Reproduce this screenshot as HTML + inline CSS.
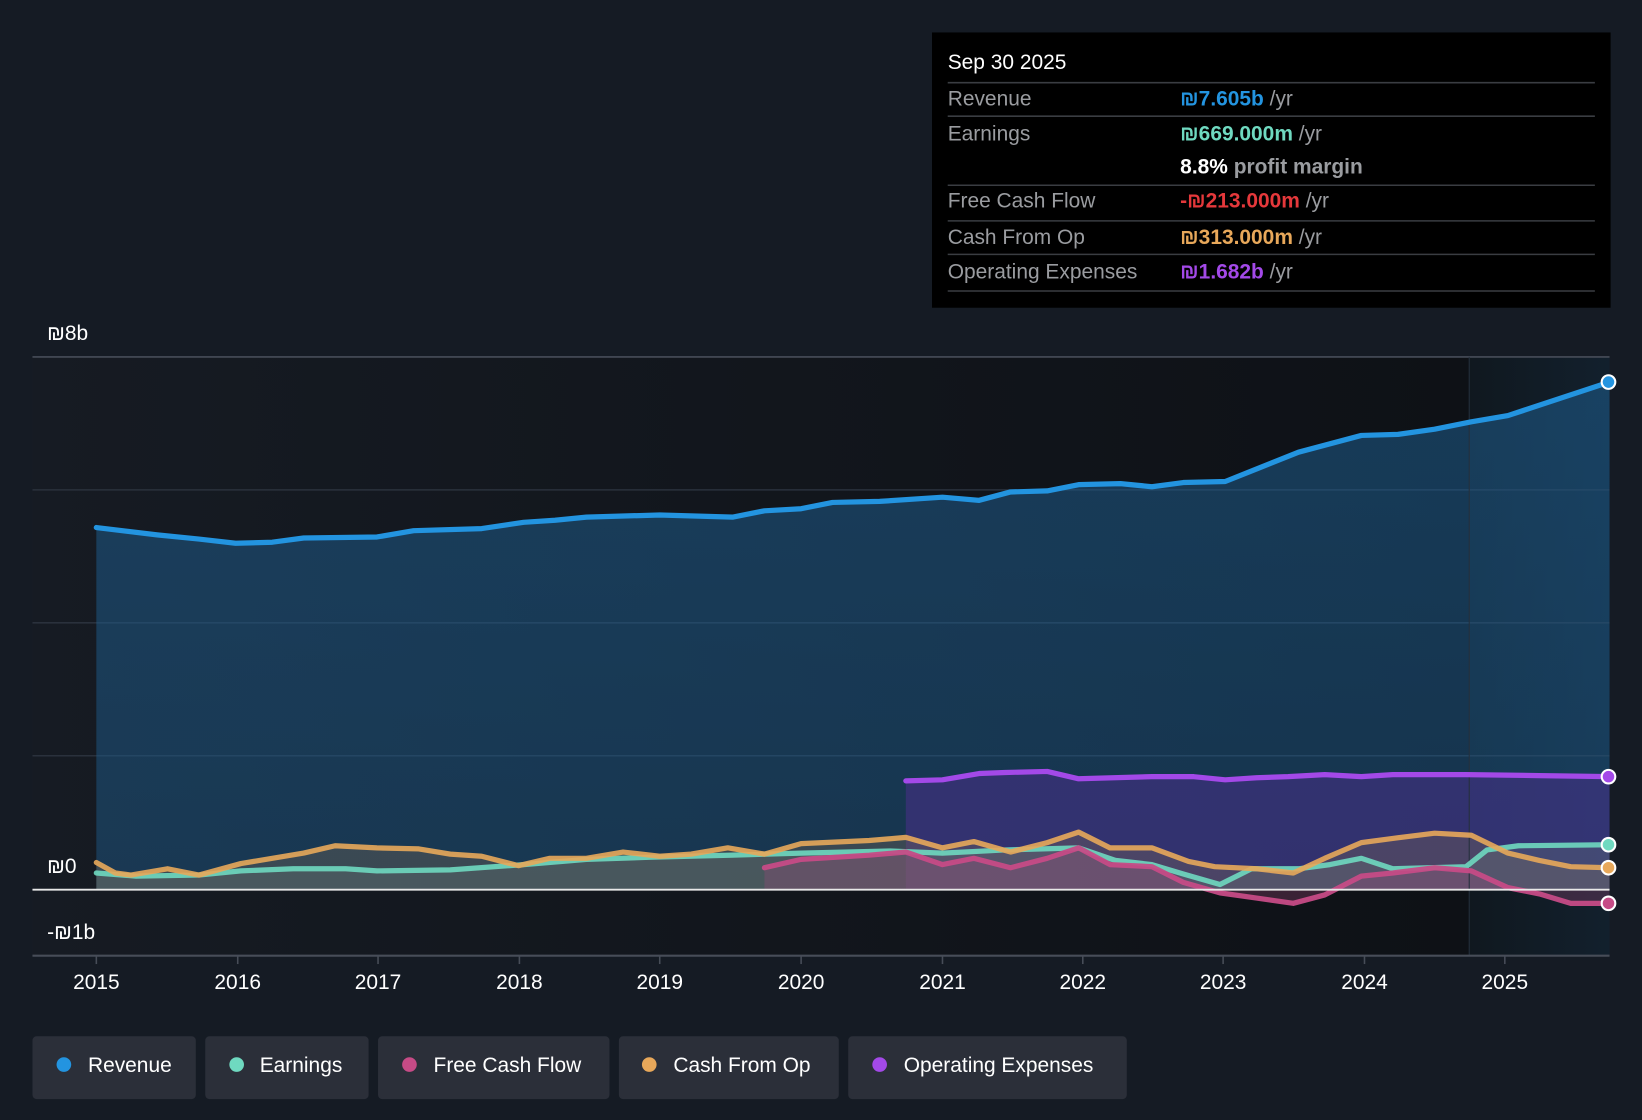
<!DOCTYPE html>
<html><head><meta charset="utf-8"><style>
html,body{margin:0;padding:0;background:#151b24;width:1642px;height:1120px;overflow:hidden}
svg{display:block}
text{font-family:"Liberation Sans",sans-serif}
</style></head><body>
<svg width="1642" height="1120" viewBox="0 0 1568 1070" preserveAspectRatio="none" xmlns="http://www.w3.org/2000/svg">
<defs>
<linearGradient id="pbg" x1="0" x2="1" y1="0" y2="0"><stop offset="0" stop-color="#161b23"/><stop offset="1" stop-color="#0e1116"/></linearGradient>
<linearGradient id="fbg" x1="0" x2="1" y1="0" y2="0"><stop offset="0" stop-color="#10181f"/><stop offset="1" stop-color="#12202d"/></linearGradient>
<linearGradient id="rev" x1="0" x2="0" y1="0" y2="1"><stop offset="0" stop-color="#1e5d8e" stop-opacity="0.55"/><stop offset="1" stop-color="#1e5d8e" stop-opacity="0.45"/></linearGradient>
</defs>
<rect width="1568" height="1070" fill="#151b24"/>
<rect x="31" y="341" width="1372" height="572" fill="url(#pbg)"/>
<rect x="1403" y="341" width="134" height="572" fill="url(#fbg)"/>
<g stroke="#2a313c" stroke-width="1.5">
<line x1="31" y1="468" x2="1537" y2="468"/><line x1="31" y1="595" x2="1537" y2="595"/><line x1="31" y1="722" x2="1537" y2="722"/>
</g>
<line x1="31" y1="341" x2="1537" y2="341" stroke="#474d58" stroke-width="1.5"/>
<path fill="url(#rev)" d="M92,504 L150,511 190,515 225,519 260,518 290,514 360,513 395,507 460,505 500,499 530,497 560,494 630,492 700,494 730,488 765,486 795,480 840,479 900,475 935,478 965,470 1000,469 1030,463 1070,462 1100,465 1130,461 1170,460 1200,448 1240,432 1270,424 1300,416 1335,415 1370,410 1405,403 1440,397 1537,365 L1537,850 92,850Z"/>
<path fill="#4a2f8a" fill-opacity="0.55" d="M865,746 L900,745 935,739 960,738 1000,737 1030,744 1100,742 1140,742 1170,745 1200,743 1230,742 1265,740 1300,742 1330,740 1400,740 1470,741 1537,742 L1537,850 865,850Z"/>
<path fill="#7a6a55" fill-opacity="0.35" d="M92,824 L110,834 125,836 160,830 190,836 230,825 290,815 320,808 360,810 400,811 430,816 460,818 495,827 525,820 560,820 595,814 630,818 660,816 695,810 730,816 765,806 830,803 865,800 900,810 930,804 965,814 1000,805 1030,795 1060,810 1100,810 1135,823 1160,828 1200,830 1235,834 1265,820 1300,805 1330,801 1370,796 1405,798 1440,815 1470,822 1500,828 1537,829 L1537,850 92,850Z"/>
<path fill="#6a7a78" fill-opacity="0.3" d="M92,834 L130,837 190,836 230,832 280,830 330,830 360,832 430,831 500,826 560,821 620,819 700,817 765,815 850,813 900,815 960,812 1030,810 1065,822 1100,826 1130,835 1165,845 1195,830 1240,830 1270,826 1300,820 1330,830 1400,828 1420,812 1450,808 1537,807 L1537,850 92,850Z"/>
<path fill="#a04a7a" fill-opacity="0.3" d="M730,829 L765,821 830,817 865,814 900,826 930,820 965,829 1000,820 1030,810 1060,826 1100,828 1130,843 1165,853 1200,858 1235,863 1265,855 1300,837 1330,834 1370,829 1405,832 1440,848 1470,854 1500,863 1537,863 L1537,850 730,850Z"/>
<line x1="1403" y1="341" x2="1403" y2="913" stroke="#25303c" stroke-width="1"/>
<g fill="none" stroke-width="5" stroke-linejoin="round" stroke-linecap="round">
<path stroke="#2394e0" d="M92,504 L150,511 190,515 225,519 260,518 290,514 360,513 395,507 460,505 500,499 530,497 560,494 630,492 700,494 730,488 765,486 795,480 840,479 900,475 935,478 965,470 1000,469 1030,463 1070,462 1100,465 1130,461 1170,460 1200,448 1240,432 1270,424 1300,416 1335,415 1370,410 1405,403 1440,397 1537,365"/>
<path stroke="#a349e8" d="M865,746 L900,745 935,739 960,738 1000,737 1030,744 1100,742 1140,742 1170,745 1200,743 1230,742 1265,740 1300,742 1330,740 1400,740 1470,741 1537,742"/>
<path stroke="#6fd9c0" stroke-opacity="0.9" d="M92,834 L130,837 190,836 230,832 280,830 330,830 360,832 430,831 500,826 560,821 620,819 700,817 765,815 850,813 900,815 960,812 1030,810 1065,822 1100,826 1130,835 1165,845 1195,830 1240,830 1270,826 1300,820 1330,830 1400,828 1420,812 1450,808 1537,807"/>
<path stroke="#c64b86" stroke-opacity="0.95" d="M730,829 L765,821 830,817 865,814 900,826 930,820 965,829 1000,820 1030,810 1060,826 1100,828 1130,843 1165,853 1200,858 1235,863 1265,855 1300,837 1330,834 1370,829 1405,832 1440,848 1470,854 1500,863 1537,863"/>
<path stroke="#e8a85a" stroke-opacity="0.9" d="M92,824 L110,834 125,836 160,830 190,836 230,825 290,815 320,808 360,810 400,811 430,816 460,818 495,827 525,820 560,820 595,814 630,818 660,816 695,810 730,816 765,806 830,803 865,800 900,810 930,804 965,814 1000,805 1030,795 1060,810 1100,810 1135,823 1160,828 1200,830 1235,834 1265,820 1300,805 1330,801 1370,796 1405,798 1440,815 1470,822 1500,828 1537,829"/>
</g>
<line x1="31" y1="850" x2="1537" y2="850" stroke="#e8e8e8" stroke-width="1.8"/>
<line x1="31" y1="913" x2="1537" y2="913" stroke="#474d58" stroke-width="2"/>
<g stroke="#474d58" stroke-width="1.5">
<line x1="92" y1="913" x2="92" y2="921"/><line x1="227" y1="913" x2="227" y2="921"/><line x1="361" y1="913" x2="361" y2="921"/><line x1="496" y1="913" x2="496" y2="921"/><line x1="630" y1="913" x2="630" y2="921"/><line x1="765" y1="913" x2="765" y2="921"/><line x1="900" y1="913" x2="900" y2="921"/><line x1="1034" y1="913" x2="1034" y2="921"/><line x1="1168" y1="913" x2="1168" y2="921"/><line x1="1303" y1="913" x2="1303" y2="921"/><line x1="1437" y1="913" x2="1437" y2="921"/>
</g>
<g stroke="#fff" stroke-width="2">
<circle cx="1536" cy="365" r="6.5" fill="#2394e0"/>
<circle cx="1536" cy="742" r="6.5" fill="#a349e8"/>
<circle cx="1536" cy="807" r="6.5" fill="#6fd9c0"/>
<circle cx="1536" cy="829" r="6.5" fill="#e8a85a"/>
<circle cx="1536" cy="863" r="6.5" fill="#c64b86"/>
</g>
<g fill="#fff" font-size="20">
<text x="45" y="325">₪8b</text>
<text x="45" y="834">₪0</text>
<text x="45" y="897">-₪1b</text>
</g>
<g fill="#fff" font-size="20" text-anchor="middle">
<text x="92" y="945">2015</text><text x="227" y="945">2016</text><text x="361" y="945">2017</text><text x="496" y="945">2018</text><text x="630" y="945">2019</text><text x="765" y="945">2020</text><text x="900" y="945">2021</text><text x="1034" y="945">2022</text><text x="1168" y="945">2023</text><text x="1303" y="945">2024</text><text x="1437" y="945">2025</text>
</g>
<rect x="890" y="31" width="648" height="263" fill="#000"/>
<g stroke="#3a3d42" stroke-width="1.5">
<line x1="905" y1="79" x2="1523" y2="79"/><line x1="905" y1="111" x2="1523" y2="111"/><line x1="905" y1="177" x2="1523" y2="177"/><line x1="905" y1="211" x2="1523" y2="211"/><line x1="905" y1="243" x2="1523" y2="243"/><line x1="905" y1="278" x2="1523" y2="278"/>
</g>
<g font-size="20">
<text x="905" y="66" fill="#fff">Sep 30 2025</text>
<g fill="#9a9ca0">
<text x="905" y="101">Revenue</text><text x="905" y="134">Earnings</text><text x="905" y="198">Free Cash Flow</text><text x="905" y="233">Cash From Op</text><text x="905" y="266">Operating Expenses</text>
</g>
<text x="1127" y="101" fill="#2394e0" font-weight="bold">₪7.605b <tspan fill="#9a9ca0" font-weight="normal">/yr</tspan></text>
<text x="1127" y="134" fill="#6fd9c0" font-weight="bold">₪669.000m <tspan fill="#9a9ca0" font-weight="normal">/yr</tspan></text>
<text x="1127" y="166" fill="#fff" font-weight="bold">8.8% <tspan fill="#9a9ca0">profit margin</tspan></text>
<text x="1127" y="198" fill="#e5383b" font-weight="bold">-₪213.000m <tspan fill="#9a9ca0" font-weight="normal">/yr</tspan></text>
<text x="1127" y="233" fill="#e8a85a" font-weight="bold">₪313.000m <tspan fill="#9a9ca0" font-weight="normal">/yr</tspan></text>
<text x="1127" y="266" fill="#a349e8" font-weight="bold">₪1.682b <tspan fill="#9a9ca0" font-weight="normal">/yr</tspan></text>
</g>
<g fill="#2b2f39">
<rect x="31" y="990" width="156" height="60" rx="4"/><rect x="196" y="990" width="156" height="60" rx="4"/><rect x="361" y="990" width="221" height="60" rx="4"/><rect x="591" y="990" width="210" height="60" rx="4"/><rect x="810" y="990" width="266" height="60" rx="4"/>
</g>
<circle cx="61" cy="1017" r="7" fill="#2394e0"/><circle cx="226" cy="1017" r="7" fill="#6fd9c0"/><circle cx="391" cy="1017" r="7" fill="#c64b86"/><circle cx="620" cy="1017" r="7" fill="#e8a85a"/><circle cx="840" cy="1017" r="7" fill="#a349e8"/>
<g fill="#fff" font-size="20">
<text x="84" y="1024">Revenue</text><text x="248" y="1024">Earnings</text><text x="414" y="1024">Free Cash Flow</text><text x="643" y="1024">Cash From Op</text><text x="863" y="1024">Operating Expenses</text>
</g>
</svg>
</body></html>
